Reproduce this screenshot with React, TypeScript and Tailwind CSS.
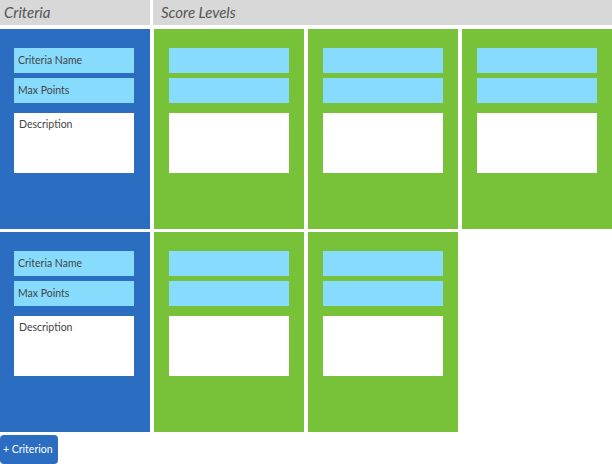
const rows = [
  { levels: 3 },
  { levels: 2 },
];

function Field({ label }: { label?: string }) {
  return (
    <div className="h-[25px] w-[120px] bg-[#87dcfe] pl-[4px] flex items-center text-[10.5px] text-[#444]">
      {label}
    </div>
  );
}

function Desc({ label }: { label?: string }) {
  return (
    <div className="mt-[5px] h-[60px] w-[120px] bg-white pl-[5px] pt-[5px] text-[10.5px] text-[#444] leading-tight">
      {label}
    </div>
  );
}

function CriteriaCard() {
  return (
    <div className="h-[200px] w-[150px] bg-[#2b6ec1] pt-[19px] pl-[14px] flex flex-col gap-[5px]">
      <Field label="Criteria Name" />
      <Field label="Max Points" />
      <Desc label="Description" />
    </div>
  );
}

function LevelCard() {
  return (
    <div className="h-[200px] w-[150px] bg-[#78c23a] pt-[19px] pl-[15px] flex flex-col gap-[5px]">
      <Field />
      <Field />
      <Desc />
    </div>
  );
}

export default function App() {
  return (
    <div className="w-[612px] h-[464px] bg-white overflow-hidden font-['Lato',sans-serif]">
      <div className="flex gap-[3px] h-[25px]">
        <div className="w-[150px] bg-[#d8d8d8] pl-[4px] flex items-center italic text-[15px] text-[#555]">
          Criteria
        </div>
        <div className="flex-1 bg-[#d8d8d8] pl-[8px] flex items-center italic text-[15px] text-[#555]">
          Score Levels
        </div>
      </div>
      <div className="mt-[4px] flex flex-col gap-[3px]">
        {rows.map((r, i) => (
          <div key={i} className="flex gap-1">
            <CriteriaCard />
            {Array.from({ length: r.levels }).map((_, j) => (
              <LevelCard key={j} />
            ))}
          </div>
        ))}
      </div>
      <button className="mt-[3px] h-[29px] w-[58px] rounded-[4px] bg-[#2b6ec1] text-white text-[10.5px] pl-[3px] text-left">
        + Criterion
      </button>
    </div>
  );
}
